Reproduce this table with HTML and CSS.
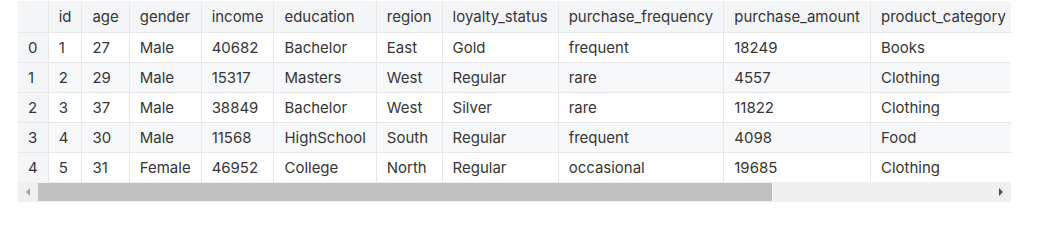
FILE: index.html
```html
<!DOCTYPE html>
<html>
<head>
<meta charset="utf-8">
<link rel="stylesheet" href="styles.css">
</head>
<body>
<div class="frame">
  <div class="viewport">
    <table class="df">
      <thead>
        <tr>
          <th class="idx"></th>
          <th>id</th><th>age</th><th>gender</th><th>income</th><th>education</th><th>region</th><th>loyalty_status</th><th>purchase_frequency</th><th>purchase_amount</th><th>product_category</th>
        </tr>
      </thead>
      <tbody>
        <tr><td class="idx">0</td><td>1</td><td>27</td><td>Male</td><td>40682</td><td>Bachelor</td><td>East</td><td>Gold</td><td>frequent</td><td>18249</td><td>Books</td></tr>
        <tr><td class="idx">1</td><td>2</td><td>29</td><td>Male</td><td>15317</td><td>Masters</td><td>West</td><td>Regular</td><td>rare</td><td>4557</td><td>Clothing</td></tr>
        <tr><td class="idx">2</td><td>3</td><td>37</td><td>Male</td><td>38849</td><td>Bachelor</td><td>West</td><td>Silver</td><td>rare</td><td>11822</td><td>Clothing</td></tr>
        <tr><td class="idx">3</td><td>4</td><td>30</td><td>Male</td><td>11568</td><td>HighSchool</td><td>South</td><td>Regular</td><td>frequent</td><td>4098</td><td>Food</td></tr>
        <tr><td class="idx">4</td><td>5</td><td>31</td><td>Female</td><td>46952</td><td>College</td><td>North</td><td>Regular</td><td>occasional</td><td>19685</td><td>Clothing</td></tr>
      </tbody>
    </table>
  </div>
  <div class="hscroll">
    <div class="sbtn">
      <svg width="6" height="8" viewBox="0 0 6 8"><polygon points="5,0 5,8 1,4" fill="#a3a3a3"/></svg>
    </div>
    <div class="track"><div class="thumb"></div></div>
    <div class="sbtn">
      <svg width="6" height="8" viewBox="0 0 6 8"><polygon points="1,0 1,8 5,4" fill="#505050"/></svg>
    </div>
  </div>
</div>
</body>
</html>
```
FILE: styles.css
```css
html, body {
  margin: 0;
  padding: 0;
  background: #ffffff;
}
body {
  padding: 1px 0 0 18px;
  font-family: Inter, "Noto Sans", sans-serif;
  font-size: 14.97px;
  color: #363636;
}
.frame {
  width: 993px;
  display: flex;
  flex-direction: column;
}
.viewport {
  overflow: hidden;
}
.hscroll {
  display: flex;
  height: 20px;
  background: #f0f0f0;
}
.sbtn {
  width: 20px;
  flex: none;
  display: flex;
  align-items: center;
  justify-content: center;
}
.track {
  flex: 1;
  display: flex;
  align-items: center;
}
.thumb {
  width: 734px;
  height: 18px;
  background: #c1c1c1;
}
.df {
  border-collapse: collapse;
  white-space: nowrap;
}
.df th, .df td {
  height: 30px;
  padding: 0 10px;
  text-align: left;
  font-weight: 400;
  border: 1px solid #e8e8e8;
  box-sizing: border-box;
}
.df thead th {
  background: #f4f5f6;
  height: 31px;
  border-top: none;
}
.df tr > :first-child {
  border-left: none;
}
.df tr > :last-child {
  border-right: none;
}
.df tbody tr:nth-child(odd) td {
  background: #ffffff;
}
.df tbody tr:nth-child(even) td {
  background: #f7f8fa;
}
.df tbody tr td.idx {
  background: #f4f5f6;
}
.df tbody tr:last-child td {
  border-bottom: none;
}
```
